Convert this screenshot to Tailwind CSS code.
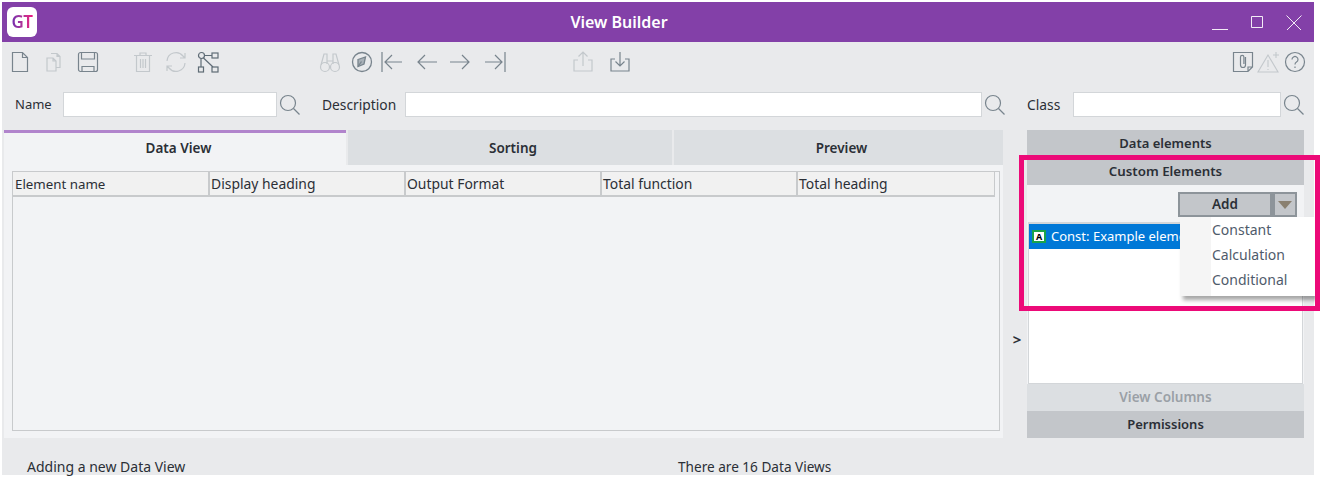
<!DOCTYPE html>
<html lang="en">
<head>
  <meta charset="UTF-8" />
  <title>View Builder</title>
  <script src="https://cdn.jsdelivr.net/npm/@tailwindcss/browser@4"></script>
</head>
<body class="bg-white w-[1320px] h-[478px] overflow-hidden font-['Noto_Sans',sans-serif] text-[13px] text-[#2b2f36]">
  <div class="relative ml-[2px] mt-[2px] w-[1312px] h-[473px] bg-[#e9eaec] flex flex-col">
    <!-- Title bar -->
    <header class="h-10 bg-[#8340a8] flex items-center shrink-0 text-white">
      <div class="ml-[5px] w-[30px] h-[30px] rounded-md bg-white flex items-center justify-center text-[17px] font-semibold tracking-tight">
        <span class="text-transparent bg-clip-text bg-gradient-to-r from-[#6f2bb0] to-[#f0107c]">GT</span>
      </div>
      <div class="w-[1164px] text-center text-[16px] font-semibold">View Builder</div>
      <div class="flex items-center gap-[21px] ml-[11px] text-white/90">
        <svg class="w-4 h-4" viewBox="0 0 16 16" fill="none" stroke="currentColor"><path d="M0 15.500h16"/></svg>
        <svg class="w-4 h-4" viewBox="0 0 16 16" fill="none" stroke="currentColor"><path d="M2.500 2.500h11v11h-11z"/></svg>
        <svg class="w-4 h-4" viewBox="0 0 16 16" fill="none" stroke="currentColor"><path d="M0.500 1.500l15 15M15.500 1.500l-15 15"/></svg>
      </div>
    </header>

    <!-- Toolbar -->
    <div class="h-[41px] shrink-0 flex items-center pl-[6px] pb-[2px] text-[#78848d]">
      <svg class="w-6 h-6" viewBox="0 0 24 24" fill="none" stroke="currentColor" stroke-width="1.200"><path d="M4.500 2.500h10l5 5v14h-15zM14.500 2.500v5h5"/></svg>
      <svg class="w-6 h-6 ml-[9px] text-[#c3c8cc]" viewBox="0 0 24 24" fill="none" stroke="currentColor" stroke-width="1.200"><path d="M10 3.500h6l3 3v11h-4M16 3.500v3h3M6 8h6l3 3v10H6zM12 8v3h3"/></svg>
      <svg class="w-6 h-6 ml-[11px]" viewBox="0 0 24 24" fill="none" stroke="currentColor" stroke-width="1.200"><rect x="2.500" y="2.500" width="19" height="19" rx="2"/><path d="M5.500 2.500V9h13V2.500M6 21.500v-5h12v5"/></svg>
      <svg class="w-6 h-6 ml-[31px] text-[#c3c8cc]" viewBox="0 0 24 24" fill="none" stroke="currentColor" stroke-width="1.200"><path d="M3 5.500h18M9 5.500V3h6v2.500M5.500 5.500V21.500h13V5.500M9.500 9v9M12 9v9M14.500 9v9"/></svg>
      <svg class="w-6 h-6 ml-[9px] text-[#c3c8cc]" viewBox="0 0 24 24" fill="none" stroke="currentColor" stroke-width="1.200"><path d="M3 11a9 9 0 0 1 16-5l2 2M21 13a9 9 0 0 1-16 5l-2-2M21 3v5h-5M3 21v-5h5"/></svg>
      <svg class="w-6 h-6 ml-[8px]" viewBox="0 0 24 24" fill="none" stroke="#5f6c76" stroke-width="1.200"><circle cx="5.500" cy="5.500" r="3"/><rect x="16" y="3" width="6" height="5"/><rect x="2.500" y="17" width="5" height="5"/><rect x="16" y="17" width="6" height="5"/><path d="M8.500 5.500H16M7.500 8l9.500 9M5 8.500V17"/></svg>
      <svg class="w-6 h-6 ml-[98px] text-[#c3c8cc]" viewBox="0 0 24 24" fill="none" stroke="currentColor" stroke-width="1.200"><circle cx="7" cy="17" r="4.500"/><circle cx="17" cy="17" r="4.500"/><path d="M3 15l3-11h3v10M21 15l-3-11h-3v10M9 11h6"/></svg>
      <svg class="w-6 h-6 ml-[8px]" viewBox="0 0 24 24" fill="none" stroke="currentColor" stroke-width="1.300"><circle cx="12" cy="12" r="9.500"/><path d="M8 9.500l7.500-2.500-1.500 7-6 2.500z" fill="#a9b1b8"/><path d="M8 16.500l3.500-5"/></svg>
      <svg class="w-6 h-6 ml-[5px]" viewBox="0 0 24 24" fill="none" stroke="currentColor" stroke-width="1.200"><path d="M3 2v20M23 12H6M13 5l-7 7 7 7"/></svg>
      <svg class="w-6 h-6 ml-[12px]" viewBox="0 0 24 24" fill="none" stroke="currentColor" stroke-width="1.200"><path d="M22 12H3M10 5l-7 7 7 7"/></svg>
      <svg class="w-6 h-6 ml-[9px]" viewBox="0 0 24 24" fill="none" stroke="currentColor" stroke-width="1.200"><path d="M2 12h19M14 5l7 7-7 7"/></svg>
      <svg class="w-6 h-6 ml-[12px]" viewBox="0 0 24 24" fill="none" stroke="currentColor" stroke-width="1.200"><path d="M21 2v20M1 12h17M11 5l7 7-7 7"/></svg>
      <svg class="w-6 h-6 ml-[63px] text-[#c3c8cc]" viewBox="0 0 24 24" fill="none" stroke="currentColor" stroke-width="1.200"><path d="M7 10H3v11h18V10h-4M12 16V2M7.500 6.500L12 2l4.500 4.500"/></svg>
      <svg class="w-6 h-6 ml-[13px]" viewBox="0 0 24 24" fill="none" stroke="currentColor" stroke-width="1.200"><path d="M7 9H3v12h18V9h-4M12 2v14M7.500 11.500L12 16l4.500-4.500"/></svg>
      <svg class="w-6 h-6 ml-auto" viewBox="0 0 24 24" fill="none" stroke="currentColor" stroke-width="1.200"><path d="M2.500 2.500h19V17l-4.500 4.500H2.500zM21.500 17H17v4.500"/><path d="M14.500 7v8a2.500 2.500 0 0 1-5 0V7a1.700 1.700 0 0 1 3.400 0v7"/></svg>
      <svg class="w-6 h-6 ml-[2px] text-[#c3c8cc]" viewBox="0 0 24 24" fill="none" stroke="currentColor" stroke-width="1.100"><path d="M11 5L1 22h20zM11 10v7M11 19v1M19 2v6M16 5h6"/></svg>
      <svg class="w-6 h-6 ml-[2px] mr-[7px]" viewBox="0 0 24 24" fill="none" stroke="currentColor" stroke-width="1.200"><circle cx="12" cy="12" r="9.500"/><path d="M9 9.500a3 3 0 1 1 4.500 2.600c-1 .6-1.500 1.200-1.500 2.400M12 16.500v1.500"/></svg>
    </div>

    <!-- Search row -->
    <div class="h-[47px] shrink-0 flex items-start pt-[9px] pl-[13px]">
      <label class="w-[48px] h-[25px] leading-[25px]">Name</label>
      <div class="w-[214px] h-[25px] bg-white border border-[#d3d6d9]"></div>
      <svg class="w-[22px] h-[22px] ml-[2px] mt-[2px] text-[#78848d]" viewBox="0 0 22 22" fill="none" stroke="currentColor" stroke-width="1.200"><circle cx="9" cy="9" r="7.500"/><path d="M14.500 14.500l6 6"/></svg>
      <label class="ml-[21px] w-[83px] h-[25px] leading-[25px] text-[13.800px]">Description</label>
      <div class="w-[577px] h-[25px] bg-white border border-[#d3d6d9]"></div>
      <svg class="w-[22px] h-[22px] ml-[2px] mt-[2px] text-[#78848d]" viewBox="0 0 22 22" fill="none" stroke="currentColor" stroke-width="1.200"><circle cx="9" cy="9" r="7.500"/><path d="M14.500 14.500l6 6"/></svg>
      <label class="ml-[21px] w-[46px] h-[25px] leading-[25px] text-[13.800px]">Class</label>
      <div class="w-[208px] h-[25px] bg-white border border-[#d3d6d9]"></div>
      <svg class="w-[22px] h-[22px] ml-[2px] mt-[2px] text-[#78848d]" viewBox="0 0 22 22" fill="none" stroke="currentColor" stroke-width="1.200"><circle cx="9" cy="9" r="7.500"/><path d="M14.500 14.500l6 6"/></svg>
    </div>

    <!-- Main -->
    <div class="flex h-[308px] shrink-0">
      <section class="ml-[2px] w-[999px] flex flex-col">
        <div class="flex h-[35px] shrink-0 gap-[2px] font-semibold text-[13.500px]">
          <div class="w-[342px] bg-[#f2f3f5] border-t-[3px] border-[#b184cc] pb-[2px] pl-[7px] flex items-center justify-center">Data View</div>
          <div class="w-[324px] bg-[#dcdfe2] pt-px pl-[6px] flex items-center justify-center">Sorting</div>
          <div class="w-[329px] bg-[#dcdfe2] pt-px pl-[6px] flex items-center justify-center">Preview</div>
        </div>
        <div class="flex-1 bg-[#f2f3f5] pt-[6px] pb-[7px] pl-2 pr-[3px]">
          <div class="h-full border border-[#c8cacc] pr-[4px]">
            <div class="h-[25px] flex border-b-2 border-r border-[#c8cacc] bg-[#f1f1f1] text-[13.900px]">
              <div class="w-[197px] pl-[2px] leading-[24px] border-r-2 border-[#c8cacc] text-[13.300px]">Element name</div>
              <div class="w-[196px] pl-[1px] leading-[24px] border-r-2 border-[#c8cacc]">Display heading</div>
              <div class="w-[196px] pl-[1px] leading-[24px] border-r-2 border-[#c8cacc]">Output Format</div>
              <div class="w-[196px] pl-[1px] leading-[24px] border-r-2 border-[#c8cacc]">Total function</div>
              <div class="flex-1 pl-[1px] leading-[24px]">Total heading</div>
            </div>
          </div>
        </div>
      </section>
      <div class="w-[24px] flex items-center justify-center text-[15px] font-bold pt-[110px] pl-[4px]">&gt;</div>
      <aside class="w-[277px] flex flex-col text-center font-semibold">
        <div class="h-[27px] bg-[#c3c6ca] leading-[27px]">Data elements</div>
        <div class="h-[27px] mt-px bg-[#c3c6ca] leading-[27px] text-[13.300px]">Custom Elements</div>
        <div class="flex-1 bg-[#f2f3f5] flex flex-col font-normal text-left">
          <div class="h-[37px] pt-[7px] flex justify-end pr-[7px]">
            <div class="w-[119px] h-[25px] flex bg-[#8d949a] p-[2px] gap-[5px]">
              <div class="flex-1 bg-[#c3c6ca] text-center font-semibold leading-[21px] text-[13.500px]">Add</div>
              <div class="w-[20px] bg-[#c3c6ca] flex items-center justify-center">
                <div class="w-0 h-0 border-x-[7px] border-x-transparent border-t-[8px] border-t-[#8a8070]"></div>
              </div>
            </div>
          </div>
          <div class="flex-1 mx-px bg-white border border-[#d3d6d9] border-t-2">
            <div class="h-[25px] bg-[#0078d7] text-white flex items-center pl-[3px] gap-[5px] whitespace-nowrap">
              <span class="w-[14px] h-[13px] bg-white border-2 border-[#1aa34a] text-[9px] font-bold leading-[9px] text-center text-black">A</span>
              Const: Example element
            </div>
          </div>
        </div>
        <div class="h-[27px] bg-[#dcdfe2] text-[#9aa0a6] leading-[27px] text-[13.500px]">View Columns</div>
        <div class="h-[27px] bg-[#c3c6ca] leading-[27px]">Permissions</div>
      </aside>
    </div>

    <!-- Status bar -->
    <footer class="flex-1 flex items-end pl-[25px] leading-[16px]">
      <div class="w-[651px] text-[14px]">Adding a new Data View</div>
      <div class="text-[13.600px]">There are 16 Data Views</div>
    </footer>

    <!-- Dropdown menu -->
    <div class="absolute left-[1178px] top-[215px] w-[135px] h-[79px] bg-white flex shadow-[3px_4px_4px_rgba(0,0,0,0.35)] text-[#4f5b6b] text-[14px]">
      <div class="w-[31px] bg-[#f5f5f5]"></div>
      <ul class="flex flex-col pl-px">
        <li class="h-[25px] leading-[25px]">Constant</li>
        <li class="h-[25px] leading-[25px]">Calculation</li>
        <li class="h-[25px] leading-[25px]">Conditional</li>
      </ul>
    </div>
  </div>
  <!-- Highlight -->
  <div class="absolute left-[1019px] top-[155px] w-[301px] h-[156px] border-[5px] border-[#ec0a78]"></div>
</body>
</html>
